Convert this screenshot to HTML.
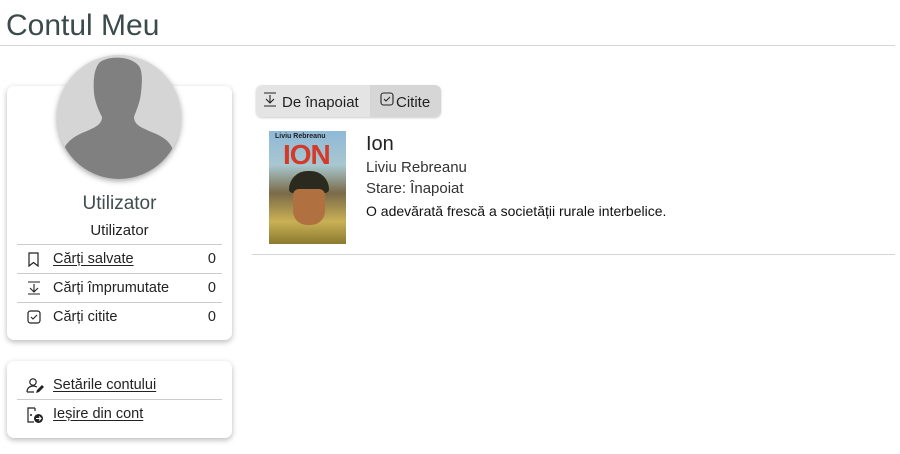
<!DOCTYPE html>
<html><head><meta charset="utf-8"><style>
*{margin:0;padding:0;box-sizing:border-box}
body{width:900px;height:454px;background:#fff;font-family:"Liberation Sans",sans-serif;color:#222;position:relative;overflow:hidden}
.abs{position:absolute}
h1{position:absolute;left:6px;top:9px;font-size:30px;font-weight:normal;color:#3b4a4a;letter-spacing:0px}
.hr{position:absolute;height:1px;background:#d4d4d4}
.card{position:absolute;background:#fff;border-radius:7px;box-shadow:0 2px 6px rgba(0,0,0,.28)}
.row{position:absolute;left:10px;width:205px;height:28px;font-size:14.5px;line-height:28px}
.row .ic{position:absolute;left:10px;top:7px}
.row .t{position:absolute;left:36px}
.row .n{position:absolute;right:6px}
u{text-decoration:underline;text-underline-offset:2px}
</style></head><body>
<h1>Contul Meu</h1>
<div class="hr" style="left:0;top:45px;width:895px"></div>

<div class="card" style="left:7px;top:86px;width:225px;height:254px">
  <div class="abs" style="left:0;top:107px;width:225px;text-align:center;font-size:19px;color:#3f4d4d">Utilizator</div>
  <div class="abs" style="left:0;top:136px;width:225px;text-align:center;font-size:15px">Utilizator</div>
  <div class="hr" style="left:10px;top:158px;width:205px;background:#ccc"></div>
  <div class="row" style="top:159px"><svg class="ic" width="14" height="15" viewBox="0 0 14 15"><path d="M2 1h9v13l-4.5-3.5L2 14z" fill="none" stroke="#222" stroke-width="1.2"/></svg><span class="t"><u>Cărți salvate</u></span><span class="n">0</span></div>
  <div class="hr" style="left:10px;top:187px;width:205px;background:#ccc"></div>
  <div class="row" style="top:188px"><svg class="ic" width="14" height="15" viewBox="0 0 14 15"><path d="M1 1h12M7 3v8M3 7l4 4 4-4M1 13h12" fill="none" stroke="#222" stroke-width="1.1"/></svg><span class="t">Cărți împrumutate</span><span class="n">0</span></div>
  <div class="hr" style="left:10px;top:216px;width:205px;background:#ccc"></div>
  <div class="row" style="top:217px"><svg class="ic" width="14" height="14" viewBox="0 0 14 14"><rect x="1" y="1" width="12" height="12" rx="2.5" fill="none" stroke="#222" stroke-width="1.2"/><path d="M4 7l2 2 4-4" fill="none" stroke="#222" stroke-width="1.1"/></svg><span class="t">Cărți citite</span><span class="n">0</span></div>
</div>
<svg class="abs" style="left:56px;top:54px;filter:drop-shadow(0 2px 3px rgba(0,0,0,.35))" width="126" height="126" viewBox="0 0 126 126">
 <defs><clipPath id="c"><circle cx="63" cy="63" r="62"/></clipPath></defs>
 <circle cx="63" cy="63" r="62" fill="#d5d5d5"/>
 <g clip-path="url(#c)" fill="#808080">
  <path d="M44 8c8-6 30-7 39 4 4 6 3 18 2 27-1 10-5 18-7 24 0 8 8 11 20 16 14 6 20 12 22 30v20H4v-20c2-17 9-24 22-30 12-5 20-8 20-16-3-6-7-14-8-24-1-12 0-25 6-31z"/>
 </g>
</svg>

<div class="card" style="left:7px;top:361px;width:225px;height:77px">
  <div class="row" style="top:10px"><svg class="ic" width="18" height="16" viewBox="0 0 18 16" style="left:9px"><circle cx="7" cy="4" r="3.2" fill="none" stroke="#222" stroke-width="1.2"/><path d="M1 14c0-4 3-6 6-6 2 0 3 .5 4 1M1 14h7" fill="none" stroke="#222" stroke-width="1.2"/><path d="M10 15l1-3 5-5 2 2-5 5z" fill="#222"/></svg><span class="t"><u>Setările contului</u></span></div>
  <div class="hr" style="left:10px;top:38px;width:205px;background:#ccc"></div>
  <div class="row" style="top:39px"><svg class="ic" width="18" height="16" viewBox="0 0 18 16" style="left:9px"><path d="M9 1H2v14h6" fill="none" stroke="#222" stroke-width="1.2"/><path d="M9 1v3" stroke="#222" stroke-width="1.2"/><circle cx="5" cy="8" r="1" fill="#222"/><circle cx="12.5" cy="11.5" r="4.5" fill="#222"/><path d="M10 11.5h5M13 9.5l2 2-2 2" fill="none" stroke="#fff" stroke-width="1.1"/></svg><span class="t"><u>Ieșire din cont</u></span></div>
</div>

<div class="abs" style="left:256px;top:85px;width:185px;height:32px;border-radius:6px;overflow:hidden;box-shadow:0 1px 2px rgba(0,0,0,.2);font-size:15px;line-height:36px">
  <div class="abs" style="left:0;top:0;width:114px;height:32px;background:#e4e4e4"><svg class="abs" style="left:7px;top:7px" width="14" height="16" viewBox="0 0 14 16"><path d="M1 1h12M7 3v8M3 7l4 4 4-4M1 14h12" fill="none" stroke="#222" stroke-width="1.1"/></svg><span class="abs" style="left:26px">De înapoiat</span></div>
  <div class="abs" style="left:114px;top:0;width:71px;height:32px;background:#d6d6d6"><svg class="abs" style="left:10px;top:7px" width="14" height="14" viewBox="0 0 14 14"><rect x="1" y="1" width="12" height="12" rx="2.5" fill="none" stroke="#222" stroke-width="1.1"/><path d="M4 7l2 2 4-4" fill="none" stroke="#222" stroke-width="1"/></svg><span class="abs" style="left:26px">Citite</span></div>
</div>

<div class="abs" style="left:269px;top:131px;width:77px;height:113px;background:linear-gradient(180deg,#8fb8d8 0%,#a8c8d0 30%,#7a6a48 55%,#c9b055 80%,#8a7a30 100%);overflow:hidden">
  <div class="abs" style="left:6px;top:2px;font-size:7px;font-weight:bold;color:#222">Liviu Rebreanu</div>
  <div class="abs" style="left:14px;top:8px;font-size:28px;font-weight:bold;color:#d43a2a;letter-spacing:-1px">ION</div>
  <div class="abs" style="left:20px;top:40px;width:40px;height:22px;background:#2a2a1e;border-radius:20px 20px 4px 4px"></div>
  <div class="abs" style="left:24px;top:58px;width:32px;height:36px;background:#b07040;border-radius:6px 6px 14px 14px"></div>
</div>
<div class="abs" style="left:366px;top:133px;font-size:20px;color:#222">Ion</div>
<div class="abs" style="left:366px;top:159px;font-size:15px;color:#333">Liviu Rebreanu</div>
<div class="abs" style="left:366px;top:180px;font-size:15px;color:#333">Stare: Înapoiat</div>
<div class="abs" style="left:366px;top:203px;font-size:14px;color:#111">O adevărată frescă a societății rurale interbelice.</div>
<div class="hr" style="left:252px;top:254px;width:643px"></div>
</body></html>
